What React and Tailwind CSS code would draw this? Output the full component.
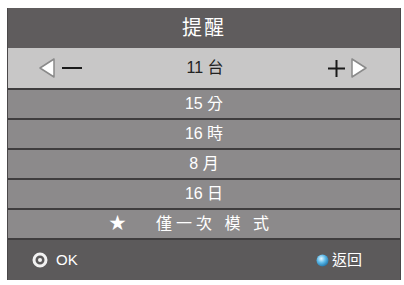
const font = { fontFamily: '"Liberation Sans", "Noto Sans CJK TC", sans-serif' };

function Triangle({ dir }) {
  const pts = dir === "left" ? "16,1 16,19 2,10" : "2,1 2,19 16,10";
  return (
    <svg width="18" height="20" viewBox="0 0 18 20">
      <polygon points={pts} fill="#ffffff" stroke="#8a8a8a" strokeWidth="1.5" strokeLinejoin="round" />
    </svg>
  );
}

function Row({ children }) {
  return (
    <div className="flex h-[30px] items-center justify-center border-t-2 border-[#3f3d3e] bg-[#8c8a8b] text-[16px] text-white">
      {children}
    </div>
  );
}

export default function App() {
  return (
    <div className="h-[285px] w-[404px] bg-white pl-[7px] pt-2" style={font}>
      <div className="flex w-[394px] flex-col border-x border-[#4a4849]">
        <div className="flex h-10 items-center justify-center bg-[#5f5c5d] text-[20px] tracking-[2px] text-white">
          提醒
        </div>
        <div className="flex h-10 items-center bg-[#c8c7c7] pl-[30px] pr-[32px] text-[#222]">
          <div className="flex items-center gap-[6px]">
            <Triangle dir="left" />
            <div className="h-[2.5px] w-[20px] bg-[#1a1a1a]" />
          </div>
          <div className="flex-1 text-center text-[16px]">11 台</div>
          <div className="flex items-center gap-[5px]">
            <svg width="17" height="17" viewBox="0 0 17 17">
              <path d="M8.5 0V17M0 8.5H17" stroke="#1a1a1a" strokeWidth="2" />
            </svg>
            <Triangle dir="right" />
          </div>
        </div>
        <Row>15 分</Row>
        <Row>16 時</Row>
        <Row>8 月</Row>
        <Row>16 日</Row>
        <Row>
          <div className="flex items-center pr-[26px]">
            <span className="mr-[30px] text-[17px]">★</span>
            <span className="tracking-[4px]">僅一次 模 式</span>
          </div>
        </Row>
        <div className="flex h-[42px] items-center justify-between border-t-2 border-[#3f3d3e] bg-[#5c5a5b] px-[24px] text-[15px] text-white">
          <div className="flex items-center gap-[8px]">
            <svg width="16" height="16" viewBox="0 0 16 16">
              <circle cx="8" cy="8" r="6" fill="none" stroke="#f2f2f2" strokeWidth="3" />
              <circle cx="8" cy="8" r="2" fill="#f2f2f2" />
            </svg>
            <span>OK</span>
          </div>
          <div className="mr-[14px] flex items-center gap-[3px]">
            <svg width="13" height="13" viewBox="0 0 13 13">
              <defs>
                <radialGradient id="b" cx="0.4" cy="0.35" r="0.7">
                  <stop offset="0" stopColor="#e6f7ff" />
                  <stop offset="0.5" stopColor="#5ab8e8" />
                  <stop offset="1" stopColor="#1d6fa3" />
                </radialGradient>
              </defs>
              <circle cx="6.5" cy="6.5" r="6" fill="url(#b)" />
            </svg>
            <span className="text-[15px]">返回</span>
          </div>
        </div>
      </div>
    </div>
  );
}
